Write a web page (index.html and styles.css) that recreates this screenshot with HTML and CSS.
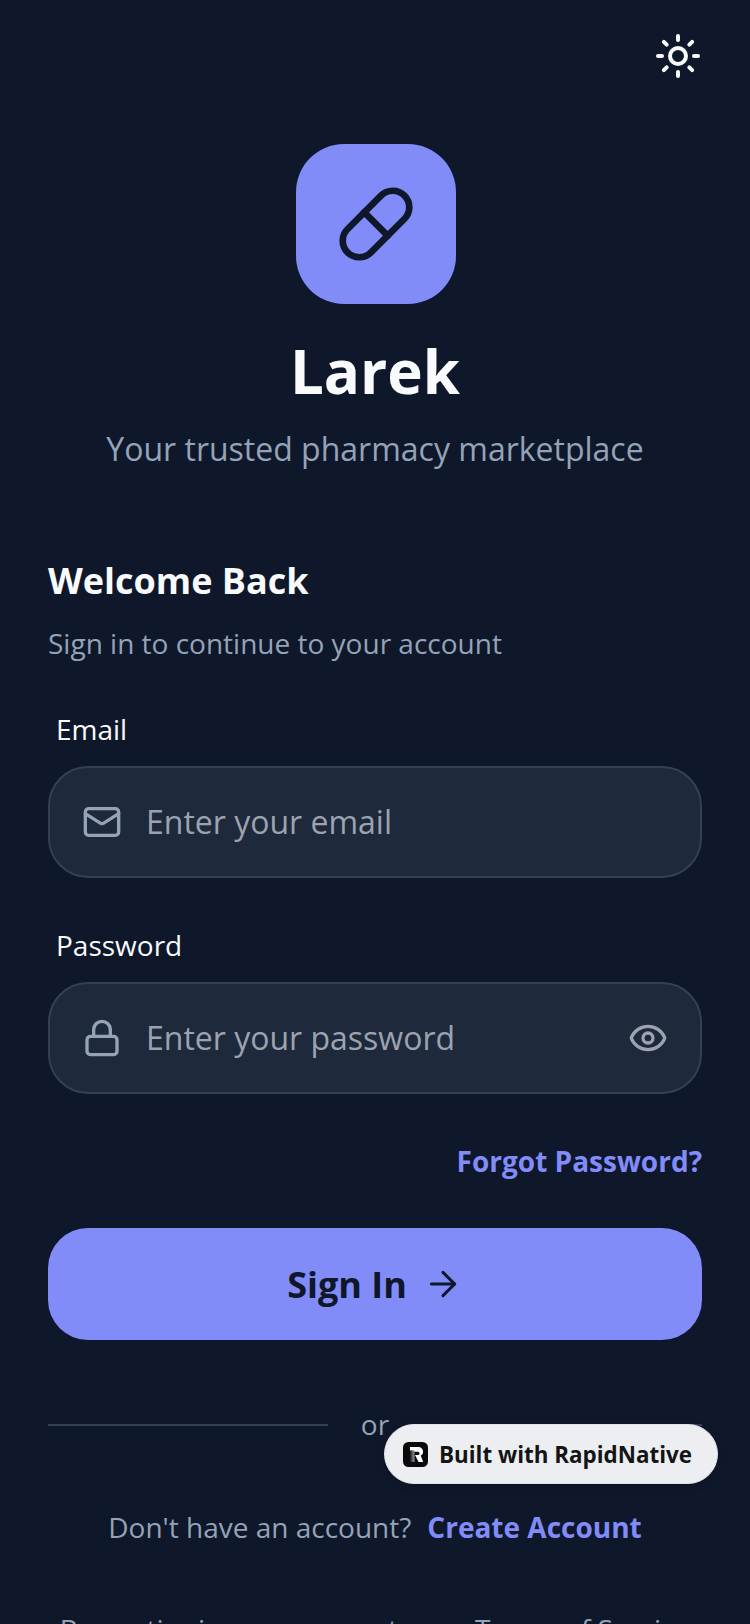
FILE: index.html
```html
<!DOCTYPE html>
<html lang="en">
<head>
<meta charset="utf-8">
<title>Larek</title>
<link rel="stylesheet" href="styles.css">
</head>
<body>
<main class="screen">
  <header class="topbar">
    <svg class="icon-sun" viewBox="0 0 24 24"><circle cx="12" cy="12" r="4"/><path d="M12 2v2"/><path d="M12 20v2"/><path d="m4.93 4.93 1.41 1.41"/><path d="m17.66 17.66 1.41 1.41"/><path d="M2 12h2"/><path d="M20 12h2"/><path d="m6.34 17.66-1.41 1.41"/><path d="m19.07 4.93-1.41 1.41"/></svg>
  </header>
  <section class="brand">
    <div class="logo">
      <svg class="icon-pill" viewBox="0 0 24 24"><path d="m10.5 20.5 10-10a4.95 4.95 0 1 0-7-7l-10 10a4.95 4.95 0 1 0 7 7Z"/><path d="m8.5 8.5 7 7"/></svg>
    </div>
    <h1 class="title">Larek</h1>
    <p class="tagline">Your trusted pharmacy marketplace</p>
  </section>
  <section class="form">
    <h2 class="heading">Welcome Back</h2>
    <p class="subheading">Sign in to continue to your account</p>
    <div class="label">Email</div>
    <div class="field">
      <svg class="icon-field" viewBox="0 0 24 24"><rect x="2" y="4" width="20" height="16" rx="2"/><path d="m22 7-8.97 5.7a1.94 1.94 0 0 1-2.06 0L2 7"/></svg>
      <span class="placeholder">Enter your email</span>
    </div>
    <div class="label">Password</div>
    <div class="field">
      <svg class="icon-field" viewBox="0 0 24 24"><rect x="3" y="11" width="18" height="11" rx="2"/><path d="M7 11V7a5 5 0 0 1 10 0v4"/></svg>
      <span class="placeholder">Enter your password</span>
      <svg class="icon-eye" viewBox="0 0 24 24"><path d="M2.062 12.348a1 1 0 0 1 0-.696 10.75 10.75 0 0 1 19.876 0 1 1 0 0 1 0 .696 10.75 10.75 0 0 1-19.876 0"/><circle cx="12" cy="12" r="3"/></svg>
    </div>
    <div class="forgot-row"><a class="link">Forgot Password?</a></div>
    <button class="submit" type="button">
      <span>Sign In</span>
      <svg class="icon-arrow" viewBox="0 0 24 24"><path d="M5 12h14"/><path d="m12 5 7 7-7 7"/></svg>
    </button>
    <div class="divider"><span class="rule"></span><span class="or">or</span><span class="rule"></span></div>
    <p class="signup"><span>Don't have an account?</span><a class="link">Create Account</a></p>
    <p class="legal">By continuing, you agree to our Terms of Service</p>
  </section>
</main>
<div class="badge">
  <svg class="badge-logo" viewBox="0 0 25 25">
    <defs><linearGradient id="stem" x1="0" y1="0" x2="1" y2="0"><stop offset="0" stop-color="#161616"/><stop offset="1" stop-color="#9a9a9a"/></linearGradient></defs>
    <rect width="25" height="25" rx="5.5" fill="#0a0a0a"/>
    <path d="M7 5h8.5a4.6 4.6 0 0 1 2.2 8.6l2.5 6.4h-4.6l-3.6-7h3a1.6 1.6 0 0 0 0-3.2H7Z" fill="#fff"/>
    <path d="M7 8.4h4.5V20H7Z" fill="url(#stem)"/>
  </svg>
  <span>Built with RapidNative</span>
</div>
</body>
</html>
```
FILE: styles.css
```css
* { box-sizing: border-box; }
html, body {
  margin: 0;
  height: 1624px;
  overflow: hidden;
  background: #0f172a;
}
body {
  position: relative;
  font-family: "Open Sans", sans-serif;
}
p, h1, h2 { margin: 0; }
svg {
  fill: none;
  stroke-linecap: round;
  stroke-linejoin: round;
  stroke-width: 2;
  flex: none;
  display: block;
}
.screen {
  display: flex;
  flex-direction: column;
  padding: 32px 48px 0;
}
.topbar {
  display: flex;
  justify-content: flex-end;
  height: 48px;
}
.icon-sun { width: 48px; height: 48px; stroke: #f8fafc; }
.brand {
  display: flex;
  flex-direction: column;
  align-items: center;
  margin-top: 64px;
}
.logo {
  width: 160px;
  height: 160px;
  margin-left: 2px;
  border-radius: 48px;
  background: #818cf8;
  display: flex;
  align-items: center;
  justify-content: center;
}
.icon-pill { width: 80px; height: 80px; stroke: #0f172a; }
.title {
  margin-top: 26px;
  font-size: 60px;
  line-height: 82px;
  font-weight: 700;
  color: #f8fafc;
}
.tagline {
  margin-top: 15px;
  font-size: 32px;
  line-height: 44px;
  color: #94a3b8;
}
.form {
  display: flex;
  flex-direction: column;
  margin-top: 85px;
}
.heading {
  font-size: 36px;
  line-height: 49px;
  font-weight: 700;
  color: #f8fafc;
}
.subheading {
  margin-top: 19px;
  font-size: 28px;
  line-height: 38px;
  color: #94a3b8;
}
.label {
  margin-top: 48px;
  padding-left: 8px;
  font-size: 28px;
  line-height: 38px;
  color: #f8fafc;
}
.field {
  margin-top: 18px;
  height: 112px;
  padding: 0 32px;
  display: flex;
  align-items: center;
  gap: 24px;
  background: #1e293b;
  border: 2px solid #334155;
  border-radius: 40px;
}
.icon-field { width: 40px; height: 40px; stroke: #94a3b8; }
.icon-eye { width: 40px; height: 40px; stroke: #9ca3af; margin-left: auto; }
.placeholder {
  font-size: 32px;
  line-height: 44px;
  color: #9ca3af;
}
.forgot-row {
  display: flex;
  justify-content: flex-end;
  margin-top: 48px;
}
.link {
  font-size: 28px;
  line-height: 38px;
  font-weight: 700;
  color: #818cf8;
}
.submit {
  margin-top: 48px;
  height: 112px;
  border: 0;
  border-radius: 40px;
  background: #818cf8;
  display: flex;
  align-items: center;
  justify-content: center;
  gap: 16px;
  font-family: inherit;
  font-size: 36px;
  font-weight: 700;
  color: #0f172a;
}
.icon-arrow { width: 40px; height: 40px; stroke: #0f172a; stroke-width: 1.8; }
.divider {
  margin-top: 65px;
  display: flex;
  align-items: center;
  gap: 33px;
}
.rule { flex: 1; height: 2px; background: #334155; }
.or {
  padding-bottom: 2px;
  font-size: 28px;
  line-height: 38px;
  color: #94a3b8;
}
.signup {
  margin-top: 63px;
  display: flex;
  justify-content: center;
  gap: 16px;
  font-size: 28px;
  line-height: 38px;
  color: #94a3b8;
}
.legal {
  margin-top: 64px;
  font-size: 28px;
  line-height: 38px;
  text-align: center;
  white-space: nowrap;
  color: #94a3b8;
}
.badge {
  position: absolute;
  left: 384px;
  top: 1424px;
  width: 334px;
  height: 60px;
  display: flex;
  align-items: center;
  gap: 11px;
  padding-left: 18px;
  background: #eceef1;
  border: 1px solid #dfe3ea;
  border-radius: 30px;
  box-shadow: 0 2px 8px rgba(0, 0, 0, 0.15);
  font-size: 22.4px;
  font-weight: 700;
  color: #141414;
}
.badge-logo { width: 25px; height: 25px; }
```
